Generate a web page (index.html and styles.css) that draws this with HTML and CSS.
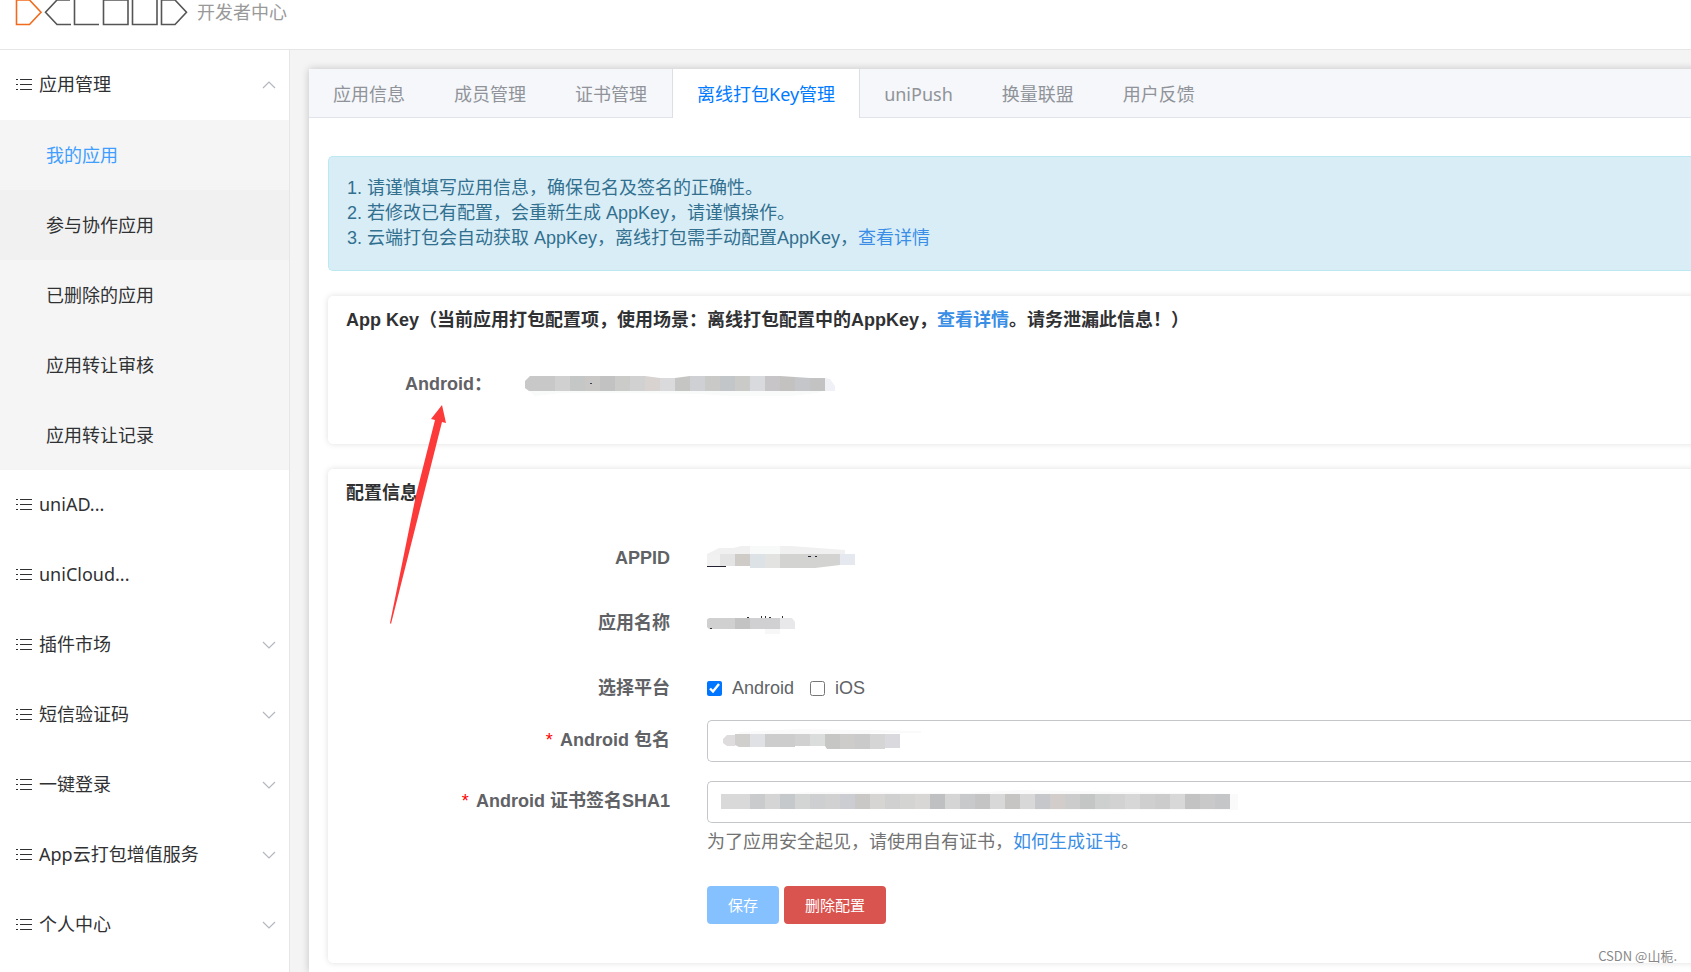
FILE: index.html
```html
<!DOCTYPE html>
<html lang="zh-CN">
<head>
<meta charset="utf-8">
<title>开发者中心</title>
<link rel="stylesheet" href="styles.css">
</head>
<body>
<svg class="defs" width="0" height="0" aria-hidden="true">
  <symbol id="list" viewBox="0 0 16 14"><path d="M4 1.500h12M4 6.500h12M4 11.500h12M0 1.500h2M0 6.500h2M0 11.500h2" stroke="currentColor" fill="none"/></symbol>
  <symbol id="down" viewBox="0 0 14 8"><path d="M1 1l6 6 6-6" stroke="#b4b7bd" stroke-width="1.200" fill="none"/></symbol>
  <symbol id="up" viewBox="0 0 14 8"><path d="M1 7l6-6 6 6" stroke="#b4b7bd" stroke-width="1.200" fill="none"/></symbol>
</svg>
<header class="topbar">
  <svg class="logo" width="189" height="26" viewBox="0 0 189 26" fill="none" stroke="#555" stroke-width="1.6" role="img" aria-label="DCLOUD">
    <path d="M16.500 0H29.500L41 12.200L29.500 24.500H16.500Z" stroke="#f26a1b"/>
    <path d="M70 0H57L45.500 12.200L57 24.500H71M74.500 0V24.500H99M103.500 0H128V24.500H103.500ZM132.500 0V24.500H157V0M161.500 0H175L186.500 12.200L175 24.500H161.500Z"/>
  </svg>
  <span class="site">开发者中心</span>
</header>
<div class="layout">
  <nav class="side">
    <a class="item" href="#"><svg class="ic"><use href="#list"/></svg>应用管理<svg class="arr"><use href="#up"/></svg></a>
    <div class="sub">
      <a class="on" href="#">我的应用</a>
      <a class="hover" href="#">参与协作应用</a>
      <a href="#">已删除的应用</a>
      <a href="#">应用转让审核</a>
      <a href="#">应用转让记录</a>
    </div>
    <a class="item" href="#"><svg class="ic"><use href="#list"/></svg>uniAD...</a>
    <a class="item" href="#"><svg class="ic"><use href="#list"/></svg>uniCloud...</a>
    <a class="item" href="#"><svg class="ic"><use href="#list"/></svg>插件市场<svg class="arr"><use href="#down"/></svg></a>
    <a class="item" href="#"><svg class="ic"><use href="#list"/></svg>短信验证码<svg class="arr"><use href="#down"/></svg></a>
    <a class="item" href="#"><svg class="ic"><use href="#list"/></svg>一键登录<svg class="arr"><use href="#down"/></svg></a>
    <a class="item" href="#"><svg class="ic"><use href="#list"/></svg>App云打包增值服务<svg class="arr"><use href="#down"/></svg></a>
    <a class="item" href="#"><svg class="ic"><use href="#list"/></svg>个人中心<svg class="arr"><use href="#down"/></svg></a>
  </nav>
  <main class="main">
    <div class="panel">
      <div class="tabs" role="tablist">
        <button class="tab" role="tab">应用信息</button>
        <button class="tab" role="tab">成员管理</button>
        <button class="tab" role="tab">证书管理</button>
        <button class="tab active" role="tab" aria-selected="true">离线打包Key管理</button>
        <button class="tab" role="tab">uniPush</button>
        <button class="tab" role="tab">换量联盟</button>
        <button class="tab" role="tab">用户反馈</button>
      </div>
      <div class="body">
        <ol class="notice">
          <li>请谨慎填写应用信息，确保包名及签名的正确性。</li>
          <li>若修改已有配置，会重新生成 AppKey，请谨慎操作。</li>
          <li>云端打包会自动获取 AppKey，离线打包需手动配置AppKey，<a href="#">查看详情</a></li>
        </ol>
        <section class="card key">
          <h2>App Key（当前应用打包配置项，使用场景：离线打包配置中的AppKey，<a href="#">查看详情</a>。请务泄漏此信息！）</h2>
          <div class="keyrow"><b>Android：</b>
            <svg class="mask" width="312" height="24" viewBox="0 0 312 24">
              <path d="M4 18l6 5 26-3h60l80 1 30 2h60l26-3 8-3z" fill="#f9fafa"/>
              <path d="M0 8l5-5h25v15H4l-4-3z" fill="#c8c8c8"/><path d="M30 3h15v15H30z" fill="#d0d0d0"/><path d="M45 3h15v15H45z" fill="#c4c7c5"/><path d="M60 3h15v15H60z" fill="#cac8c7"/><path d="M75 3h15v15H75z" fill="#c2c2c2"/><path d="M90 3h15v15H90z" fill="#cbcbca"/><path d="M105 3h15v15h-15z" fill="#d1d1d1"/><path d="M120 3l15 2v13h-15z" fill="#d8d3d0"/><path d="M135 5h15v13h-15z" fill="#dadadd"/><path d="M150 5l15-2v15h-15z" fill="#c5c5c4"/><path d="M165 3h15v15h-15z" fill="#cfd0d4"/><path d="M180 3h15v15h-15z" fill="#c9c9c7"/><path d="M195 3h15v15h-15z" fill="#c3c6c8"/><path d="M210 3h15v15h-15z" fill="#cacac9"/><path d="M225 3h15v15h-15z" fill="#d9dadd"/><path d="M240 3h15v15h-15z" fill="#c8c5c8"/><path d="M255 3l15 1v14h-15z" fill="#c3c2c0"/><path d="M270 4l15 1v13h-15z" fill="#c4c6ca"/><path d="M285 5h15v13h-15z" fill="#c3c3c4"/><path d="M300 5l5 1 5 7v5h-10z" fill="#f0f1f6"/><path d="M65 10h2v1h-2z" fill="#345"/>
            </svg>
          </div>
        </section>
        <section class="card conf">
          <h2>配置信息</h2>
          <form class="form">
            <b class="lab">APPID</b>
            <div class="val tall"><svg class="mask" width="150" height="22" viewBox="2 0 150 22">
              <path d="M0 9l14-7h14l8-2h50l54 4v5z" fill="#f0f0f0"/><path d="M45 0h30v8H45z" fill="#f8faf9"/>
              <path d="M0 9h15v12H0z" fill="#f1f1f1"/><path d="M15 8h15v12H15z" fill="#e4e4e4"/><path d="M30 8h15v12H30z" fill="#cfccc8"/><path d="M45 8h15v14H45z" fill="#dde2e6"/><path d="M60 8h15v14H60z" fill="#e3e3e2"/><path d="M75 8h60v11l-25 3H75z" fill="#d3d3d1"/><path d="M135 8h15v11h-15z" fill="#e5e9ef"/><path d="M2 20h19v1H2zM103 10h3v1h-3zM110 10h2v1h-2z" fill="#223"/>
            </svg></div>
            <b class="lab">应用名称</b>
            <div class="val tall"><svg class="mask" width="90" height="23" viewBox="2 -5 90 23">
              <path d="M4 2h26v11H4l-4-4V5z" fill="#d0d0d0"/><path d="M30 2h15v11H30z" fill="#c3c3c4"/><path d="M45 2h30v11H45z" fill="#d0d0d2"/><path d="M75 2h12l3 4v7H75z" fill="#e8e8ea"/><path d="M60 13h15v5H60z" fill="#f7f7f7"/><path d="M42 1h2v1h-2zM56 0h1v2h-1zM60 0h1v2h-1zM64 1h2v1h-2zM77 0h1v2h-1zM5 12h2v1H5z" fill="#333"/>
            </svg></div>
            <b class="lab">选择平台</b>
            <div class="val tall checks">
              <label><input type="checkbox" checked>Android</label>
              <label><input type="checkbox">iOS</label>
            </div>
            <label class="lab" for="pkg"><i>*</i> Android 包名</label>
            <div class="val field"><input id="pkg" type="text">
              <svg class="cover" width="200" height="24" viewBox="-2 0 200 24"><path d="M16 3l60-3 124 2v2h-50l-10 2H16z" fill="#fafafa"/><path d="M0 10l4-4h8v11H4l-4-3z" fill="#dedcdd"/><path d="M12 5h15v13H16l-4-2z" fill="#d0cfcd"/><path d="M27 5h15v13H27z" fill="#dfe1e4"/><path d="M42 5h30v13H42z" fill="#cccdcc"/><path d="M72 5h15v12H72z" fill="#d1d1d2"/><path d="M87 5h15v12H87z" fill="#dbdddc"/><path d="M102 5h15v15h-13l-2-3z" fill="#c6c6c5"/><path d="M117 5h15v15h-15z" fill="#cdccca"/><path d="M132 5h15v15h-15z" fill="#c9cac9"/><path d="M147 5h15v15h-15z" fill="#d5d5d5"/><path d="M162 5h15v14h-15z" fill="#dadade"/></svg></div>
            <label class="lab" for="sha"><i>*</i> Android 证书签名SHA1</label>
            <div class="val field last"><input id="sha" type="text">
              <svg class="cover" width="520" height="24" viewBox="0 0 520 24"><path d="M-3 5l100-3 150 1 50-3 220 4v16H330l-80-2H100z" fill="#fafafa"/><g id="sha-mask"></g></svg></div>
            <p class="val help">为了应用安全起见，请使用自有证书，<a href="#">如何生成证书</a>。</p>
            <div class="val btns"><button class="btn save" type="button" disabled>保存</button><button class="btn del" type="button">删除配置</button></div>
          </form>
        </section>
      </div>
    </div>
  </main>
</div>
<svg class="pointer" width="60" height="222" viewBox="0 0 60 222" aria-hidden="true"><path d="M52 0L56 18L52 17L1 219L0 218L26 90L45 15L41 14Z" fill="#fd3a3a"/></svg>
<span class="mark">CSDN @山栀.</span>
<script src="mask.js"></script>
</body>
</html>
```
FILE: styles.css
```css
* { box-sizing: border-box; }
body { margin: 0; overflow: hidden; height: 100vh; display: flex; flex-direction: column; background: #fff; color: #303133; font: 18px/25px "Liberation Sans", "Noto Sans CJK SC", sans-serif; }
a { color: #3a8ee6; text-decoration: none; }
h2, p, ol { margin: 0; }
.defs { position: absolute; }
.topbar { flex: none; height: 50px; border-bottom: 1px solid #e6e6e6; display: flex; align-items: flex-start; gap: 8px; color: #999; }
.logo { flex: none; }
.layout { flex: 1; min-height: 0; display: flex; background: #f4f4f4; }
.side { flex: none; width: 290px; background: #fff; border-right: 1px solid #e6e6e6; }
.side, .tabs, .site { font-family: "Noto Sans", "Noto Sans CJK SC", sans-serif; }
.item { display: flex; align-items: center; height: 70px; padding: 0 13px 1px 16px; color: #303133; }
.ic { width: 16px; height: 14px; margin-right: 7px; }
.arr { width: 14px; height: 8px; margin-left: auto; }
.sub { background: #f5f5f5; }
.sub a { display: flex; align-items: center; height: 70px; padding-left: 46px; color: #303133; }
.sub .hover { background: #f1f1f1; }
.sub .on { color: #409eff; }
.main { flex: 1; min-width: 0; padding: 19px 0 0 19px; }
.panel { height: 100%; margin-right: -10px; background: #fff; box-shadow: 0 0 8px rgba(0, 0, 0, .2); }
.tabs { display: flex; height: 49px; background: #f5f7fa; border-bottom: 1px solid #e0e3ea; }
.tab { height: 49px; padding: 2px 24px 0; border: 0; border-right: 1px solid transparent; background: none; color: #909399; font: inherit; white-space: nowrap; }
.tab.active { background: #fff; color: #007aff; border-left: 1px solid #dcdfe6; border-right-color: #dcdfe6; }
.body { padding: 38px 0 0 19px; }
.notice { height: 115px; padding: 19px 19px 19px 38px; background: #d9edf7; border: 1px solid #bce8f1; border-right: 0; border-radius: 5px 0 0 5px; color: #31708f; }
.card { margin-top: 25px; padding: 12px 18px; border-radius: 5px 0 0 5px; background: #fff; box-shadow: 0 0 6px rgba(0, 0, 0, .13); }
.card h2 { font-size: 18px; line-height: 25px; white-space: nowrap; }
.key { height: 148px; }
.keyrow { display: flex; align-items: center; height: 25px; margin-top: 39px; padding-left: 59px; color: #606266; }
.keyrow b { width: 120px; white-space: nowrap; }
.mask { display: block; }
.conf { height: 494px; }
.form { display: grid; grid-template-columns: 324px 1fr; column-gap: 37px; margin-right: -18px; padding-top: 32px; color: #606266; }
.lab { align-self: start; line-height: 40px; text-align: right; font-weight: 700; white-space: nowrap; }
.lab i { color: #f00; font-style: normal; font-weight: 400; margin-right: 3px; }
.val { grid-column: 2; }
.tall { height: 65px; padding-top: 8px; }
.checks { display: flex; gap: 16px; height: 52px; }
.checks label { display: flex; align-items: center; gap: 10px; height: 25px; }
.checks input { width: 15px; height: 15px; margin: 0; accent-color: #0075ff; }
.field { position: relative; height: 61px; }
.field.last { height: 49px; }
.field input { display: block; width: 100%; height: 42px; padding: 0 15px; border: 1px solid #c4c6ca; border-right: 0; border-radius: 5px 0 0 5px; font: inherit; outline: 0; }
.cover { position: absolute; left: 14px; top: 9px; }
.help { color: #737373; line-height: 25px; }
.btns { display: flex; gap: 5px; padding-top: 31px; }
.btn { height: 38px; padding: 0 21px 2px; border: 0; border-radius: 4px; color: #fff; font: 15px "Liberation Sans", "Noto Sans CJK SC", sans-serif; }
.save { background: #85c1ff; }
.del { background: #d9534f; }
.pointer { position: absolute; left: 390px; top: 405px; }
.mark { position: absolute; right: 14px; bottom: 4px; font: 13px/24px "Noto Sans CJK SC", sans-serif; color: #888; }
```
FILE: mask.js
```js
const shades = ["#dad9d9", "#dad9d9", "#c9cbcd", "#d6d5d5", "#c6c9cc", "#d3d4d4", "#cecfd0", "#d1d1d1", "#cccdd2", "#c9c8c6", "#d6d5d3", "#d0d0d0", "#d4d4d3", "#d8d7d5", "#bfc0c2", "#d5d5d5", "#c8c9cb", "#c4c4c5", "#d8d8d8", "#c6c5c3", "#d8d8d9", "#c5c7ca", "#d2cdca", "#cccccc", "#c3c6c4", "#cdd0cf", "#d2d2d2", "#d7d7d7", "#cfcfcf", "#cccccc", "#d8d8d8", "#c3c3c3", "#c9c9ca", "#c5c6c8"];
document.getElementById("sha-mask").innerHTML = shades.map((c, i) => `<rect x="${i * 15 - 1}" y="4" width="15" height="15" fill="${c}"/>`).join("");
```
